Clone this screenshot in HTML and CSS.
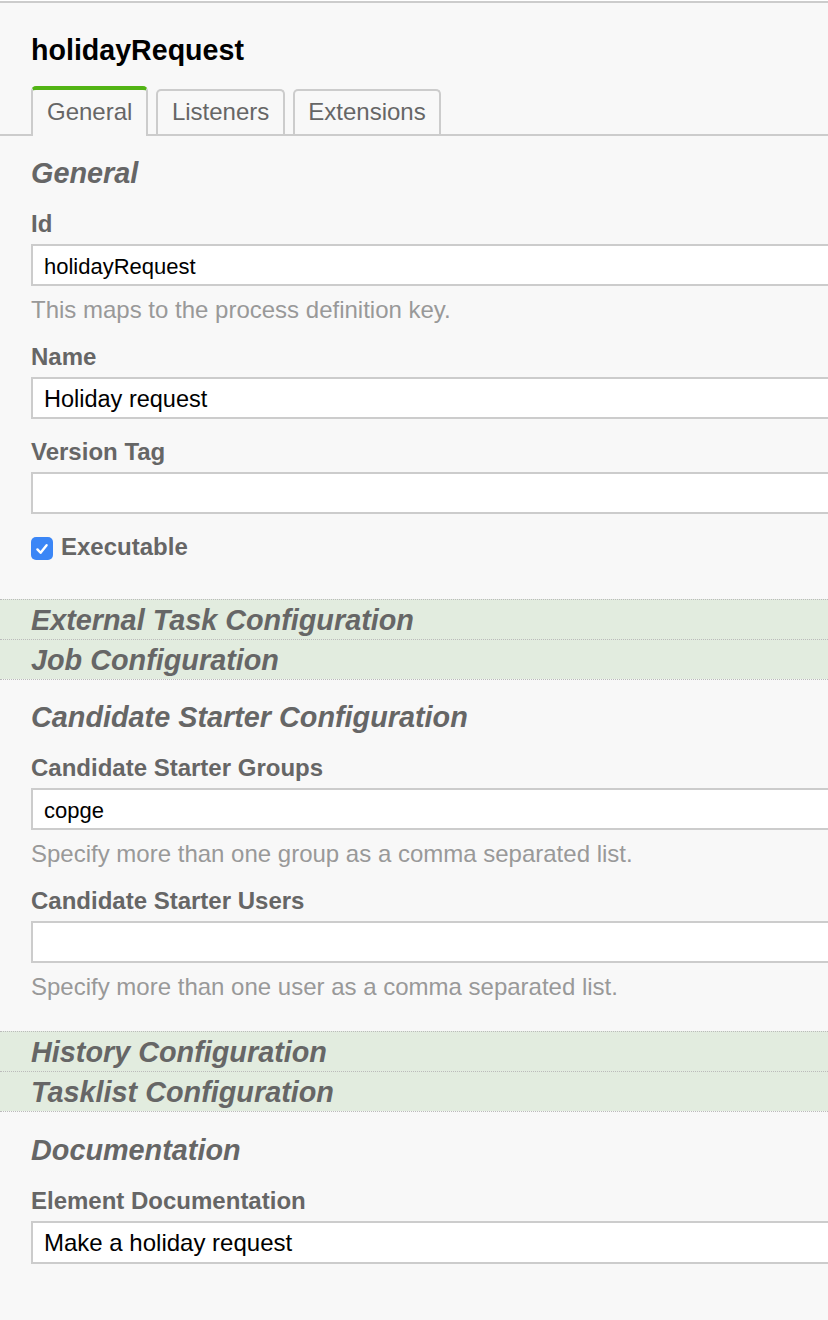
FILE: index.html
```html
<!DOCTYPE html>
<html lang="en">
<head>
<meta charset="utf-8">
<title>holidayRequest properties</title>
<link rel="stylesheet" href="styles.css">
</head>
<body>
<div class="panel">
  <header class="panel-header">
    <h1 class="title">holidayRequest</h1>
    <nav class="tabs">
      <div class="tab tab-active">General</div>
      <div class="tab">Listeners</div>
      <div class="tab">Extensions</div>
    </nav>
  </header>

  <section class="group group-general">
    <h2 class="group-title">General</h2>
    <div class="entry">
      <label class="label">Id</label>
      <div class="input">holidayRequest</div>
      <div class="desc">This maps to the process definition key.</div>
    </div>
    <div class="entry">
      <label class="label">Name</label>
      <div class="input input-textbox">Holiday request</div>
    </div>
    <div class="entry">
      <label class="label">Version Tag</label>
      <div class="input"></div>
    </div>
    <div class="entry entry-check">
      <span class="checkbox">
        <svg width="16" height="16" viewBox="0 0 16 16"><path d="M3.4 8.4 L6.6 11.8 L12.6 4.2" fill="none" stroke="#fff" stroke-width="2.4" stroke-linecap="round" stroke-linejoin="round"/></svg>
      </span>
      <span class="label check-label">Executable</span>
    </div>
  </section>

  <div class="closed-group">External Task Configuration</div>
  <div class="closed-group">Job Configuration</div>

  <section class="group">
    <h2 class="group-title">Candidate Starter Configuration</h2>
    <div class="entry">
      <label class="label">Candidate Starter Groups</label>
      <div class="input">copge</div>
      <div class="desc">Specify more than one group as a comma separated list.</div>
    </div>
    <div class="entry">
      <label class="label">Candidate Starter Users</label>
      <div class="input"></div>
      <div class="desc">Specify more than one user as a comma separated list.</div>
    </div>
  </section>

  <div class="closed-group">History Configuration</div>
  <div class="closed-group">Tasklist Configuration</div>

  <section class="group group-doc">
    <h2 class="group-title">Documentation</h2>
    <div class="entry">
      <label class="label">Element Documentation</label>
      <div class="input input-textbox input-doc">Make a holiday request</div>
    </div>
  </section>
</div>
</body>
</html>
```
FILE: styles.css
```css
html, body {
  margin: 0;
  padding: 0;
  background: #ffffff;
  overflow: hidden;
}

body {
  padding-top: 1px;
  font-family: "Liberation Sans", Arial, Helvetica, sans-serif;
}

.panel {
  background: #f8f8f8;
  border-top: 2px solid #cccccc;
  min-height: 1320px;
  width: 880px;
}

.panel-header {
  padding-top: 30px;
}

.title {
  margin: 0 0 19px 31px;
  font-size: 28.6px;
  line-height: 34px;
  font-weight: bold;
  color: #000000;
}

.tabs {
  display: flex;
  align-items: flex-end;
  gap: 8px;
  padding-left: 31px;
  border-bottom: 2px solid #cccccc;
}

.tab {
  font-size: 24px;
  line-height: 28px;
  color: #666666;
  border: 2px solid #cccccc;
  border-bottom: none;
  border-radius: 5px 5px 0 0;
  padding: 7px 13.5px 8px 13.5px;
  background: #f8f8f8;
}

.tab-active {
  border-top: 4px solid #52b415;
  padding: 8px 14px 10px 14px;
  margin-bottom: -2px;
}

.group {
  padding: 20px 0 11px 31px;
}

.group-doc {
  padding-top: 21px;
}

.group-title {
  margin: 0 0 20px 0;
  font-size: 28.8px;
  line-height: 34px;
  font-weight: bold;
  font-style: italic;
  color: #666666;
}

.entry {
  margin-bottom: 19px;
}

.label {
  display: block;
  font-size: 24px;
  line-height: 28px;
  font-weight: bold;
  color: #666666;
  margin-bottom: 6px;
}

.input {
  box-sizing: border-box;
  height: 42px;
  border: 2px solid #cccccc;
  background: #ffffff;
  padding: 3px 11px 0 11px;
  font-size: 22px;
  line-height: 35px;
  color: #000000;
}

.input-textbox {
  font-size: 23.5px;
  padding-top: 2px;
  line-height: 36px;
}

.input-doc {
  font-size: 24px;
  height: 43px;
}

.desc {
  font-size: 24px;
  line-height: 28px;
  color: #999999;
  margin-top: 10px;
}

.entry-check {
  display: flex;
  align-items: flex-start;
  margin-bottom: 27px;
}

.checkbox {
  box-sizing: border-box;
  width: 22px;
  height: 23px;
  margin-top: 4px;
  margin-right: 8px;
  border-radius: 5px;
  background: #3b86f6;
  display: flex;
  align-items: center;
  justify-content: center;
}

.checkbox svg {
  display: block;
}

.check-label {
  margin-bottom: 0;
}

.closed-group {
  border-top: 1px dotted #bbbbbb;
  background: #e2ecdf;
  padding: 3px 0 2px 31px;
  font-size: 28.8px;
  line-height: 34px;
  font-weight: bold;
  font-style: italic;
  color: #666666;
}

.closed-group + .group {
  border-top: 1px dotted #bbbbbb;
}
```
